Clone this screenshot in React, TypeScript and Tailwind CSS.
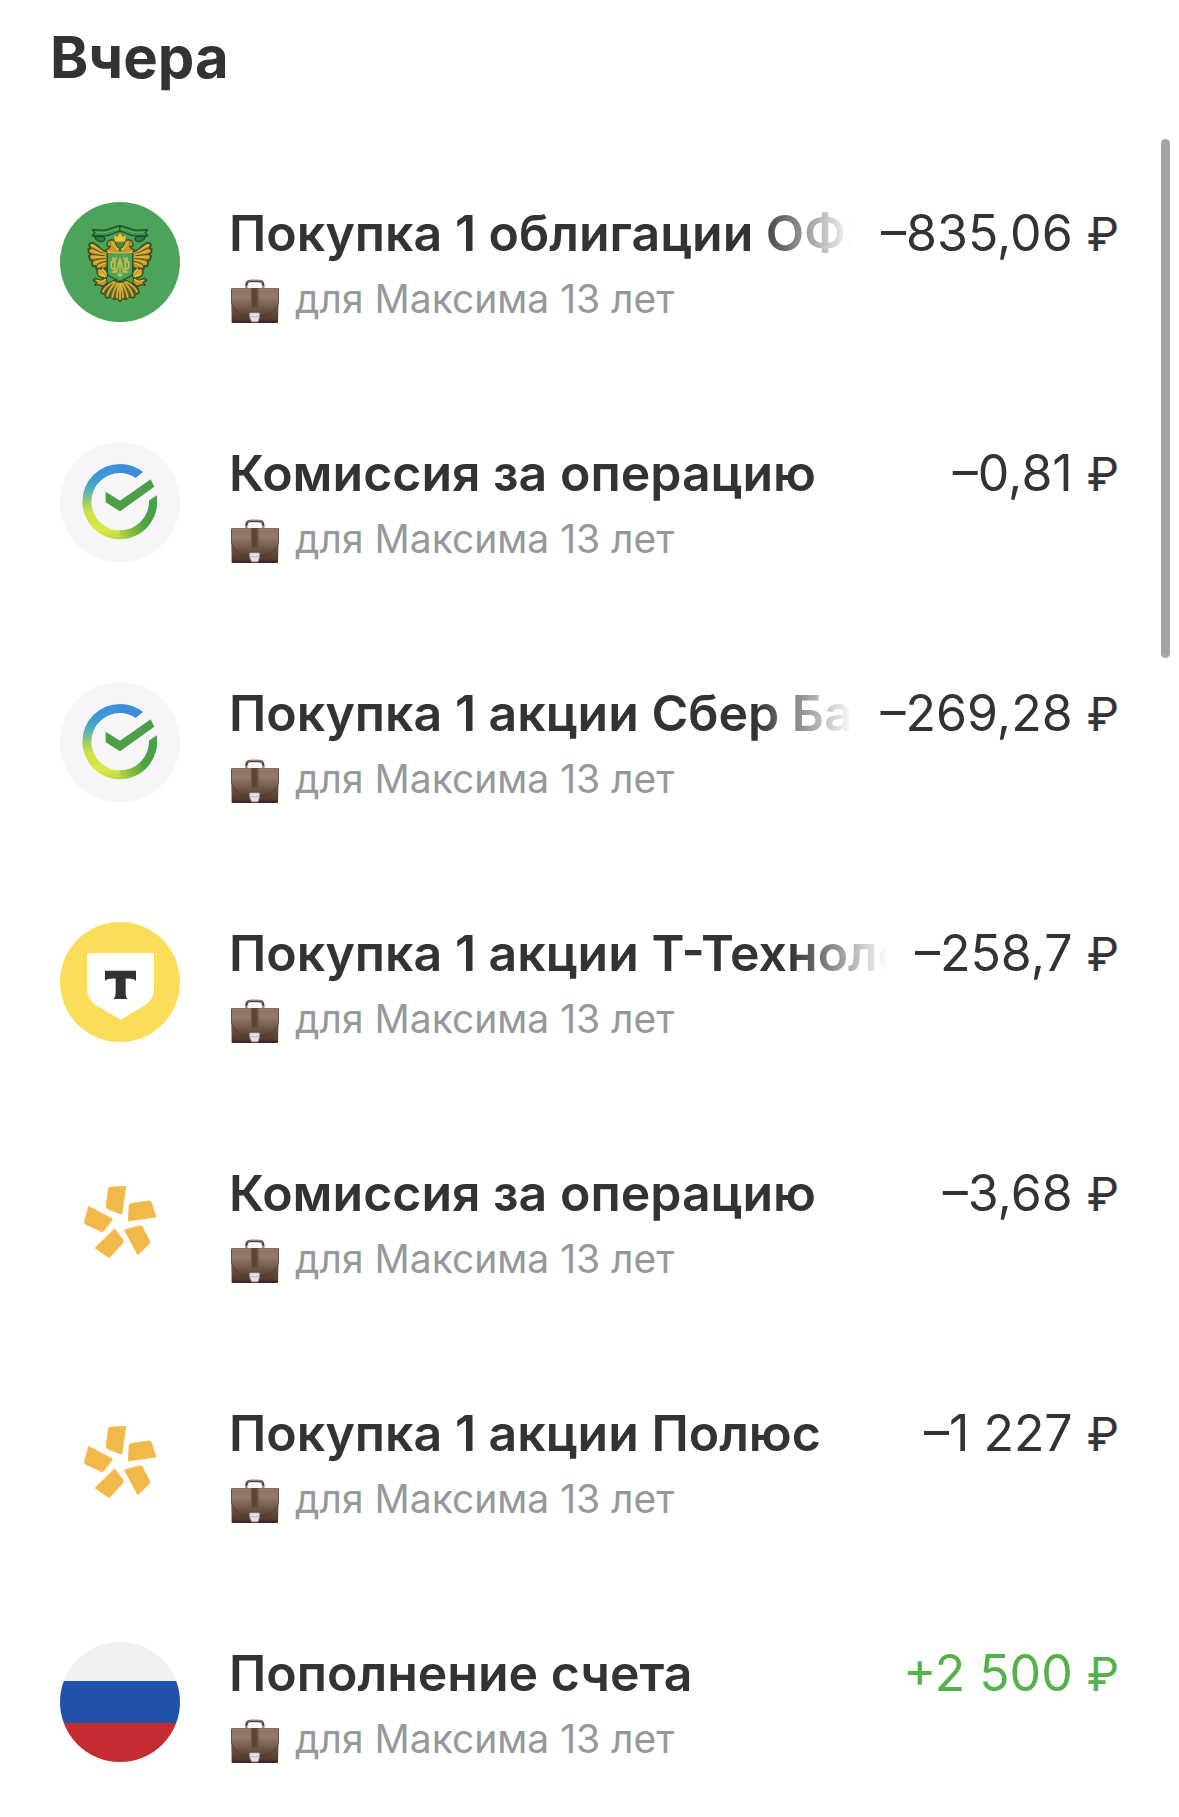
import type { ReactNode } from "react";

interface Operation {
  id: number;
  title: string;
  amount: string;
  faded?: boolean;
  income?: boolean;
  logo: ReactNode;
}

function BondLogo() {
  // half of the emblem, mirrored around x = 240
  const half = (
    <g strokeLinejoin="round" strokeLinecap="round">
      <path d="M240 137C222 139 212 149 196 150C184 151 174 149 157 149L164 158L157 168C176 167 192 169 206 166C220 163 228 155 240 154Z" fill="#3a9250" stroke="#1b4f2c" strokeWidth="4" />
      <path d="M170 157C190 160 205 157 217 151L240 146" fill="none" stroke="#8ab04e" strokeWidth="3" strokeDasharray="3 3" />
      <path d="M164 170C166 180 176 186 188 184C196 181 197 174 190 170Z" fill="#2c7f46" stroke="#1b4f2c" strokeWidth="4" />
      <path d="M205 214C190 214 184 209 179 203L160 188L149 190L147 198L153 204L145 208L146 218L153 221L147 228L150 240L159 241L155 249L159 259L168 258L168 266L177 270L184 264L190 268L201 262Z" fill="#bd9230" stroke="#3a4a1c" strokeWidth="5" />
      <path d="M155 196C168 200 174 208 186 214M153 213C166 214 175 221 190 222M156 231C168 229 178 232 193 231M163 249C173 243 182 243 195 240M176 260C183 252 188 250 198 249" fill="none" stroke="#deb336" strokeWidth="5" />
      <path d="M157 204C167 208 174 214 187 219M155 223C168 223 178 226 191 227M160 241C170 236 181 237 194 236M170 256C179 248 187 246 197 245" fill="none" stroke="#4a4a1c" strokeWidth="3" />
      <path d="M237 216L203 218L196 212C202 207 207 206 211 199C204 201 199 197 202 190C203 183 211 177 220 180C228 184 226 191 233 201L240 206Z" fill="#c49a2f" stroke="#3a4a1c" strokeWidth="4" />
      <path d="M206 190C213 185 218 187 220 193C222 200 229 204 236 209" fill="none" stroke="#e6bf38" strokeWidth="4" />
      <circle cx="211" cy="188" r="2" fill="#263c1c" />
      <path d="M174 265C168 275 171 287 181 291L198 297L204 286L197 267Z" fill="#c49a2f" stroke="#3a4a1c" strokeWidth="4" />
      <path d="M179 271L193 289M187 267L199 281M177 281L188 289" stroke="#e6bf38" strokeWidth="4" fill="none" />
      <path d="M198 294L184 301L166 295L160 301L171 307L164 316L177 314L188 320L202 308Z" fill="#c49a2f" stroke="#3a4a1c" strokeWidth="4" />
      <path d="M170 301C180 306 188 305 197 298" fill="none" stroke="#e6bf38" strokeWidth="4" />
      <path d="M240 308L222 300L206 309L186 324L182 339L194 344L197 354L214 353L222 360L232 356L240 365Z" fill="#56602a" stroke="#3a4a1c" strokeWidth="3" />
      <path d="M220 306C208 313 194 322 189 335M225 308C215 321 204 333 202 347M232 310C226 325 219 337 217 351M237 311C235 326 230 340 231 352" fill="none" stroke="#d3aa34" strokeWidth="6" />
    </g>
  );
  return (
    <svg viewBox="60 66 360 360" className="size-full" aria-hidden="true">
      <circle cx="240" cy="246" r="180" fill="#4ca45a" />
      {half}
      <g transform="translate(480 0) scale(-1 1)">{half}</g>
      <path d="M240 309V359" stroke="#e6bf38" strokeWidth="5" />
      <path d="M202 220L240 214L278 220V280C276 292 254 295 240 305C226 295 204 292 202 280Z" fill="#4ca45a" stroke="#28542b" strokeWidth="4" />
      <path d="M202 217H278" stroke="#deb336" strokeWidth="6" />
      <path d="M224 186L220 161L231 170L240 156L249 170L260 161L256 186Z" fill="#eec536" stroke="#5c6a27" strokeWidth="2" />
      <path d="M229 190H251L249 199L240 206L231 199Z" fill="#358b48" />
      <g fill="none" stroke="#d6bb45" strokeWidth="5">
        <path d="M216 236H230M250 236H264M224 238V275M256 238V275M215 276H231M249 276H265" />
        <path d="M224 242C210 242 210 268 224 268M256 242C270 242 270 268 256 268" />
        <path d="M229 276L240 236L251 276M240 236V289M232 281L240 289L248 281" strokeWidth="4" />
      </g>
    </svg>
  );
}

function SberLogo({ id }: { id: string }) {
  return (
    <svg viewBox="60 66 360 360" className="size-full" aria-hidden="true">
      <defs>
        <linearGradient id={`${id}-left`} gradientUnits="userSpaceOnUse" x1="220" y1="132" x2="240" y2="358">
          <stop offset="0" stopColor="#3b8fdc" />
          <stop offset="0.16" stopColor="#3f97d8" />
          <stop offset="0.32" stopColor="#52b3b4" />
          <stop offset="0.46" stopColor="#9acb69" />
          <stop offset="0.62" stopColor="#d0e045" />
          <stop offset="0.86" stopColor="#dde64a" />
          <stop offset="1" stopColor="#b9d542" />
        </linearGradient>
        <linearGradient id={`${id}-right`} gradientUnits="userSpaceOnUse" x1="239" y1="350" x2="320" y2="320">
          <stop offset="0" stopColor="#b9d542" />
          <stop offset="0.5" stopColor="#7dbb43" />
          <stop offset="1" stopColor="#4a9f47" />
        </linearGradient>
      </defs>
      <circle cx="240" cy="246" r="180" fill="#f6f6f8" />
      <path d="M239 132A113 113 0 0 1 309 156L287 174A86 86 0 0 0 239 159Z" fill="#3b8cdb" />
      <path d="M240 132A113 113 0 0 0 240 358V331A86 86 0 0 1 240 159Z" fill={`url(#${id}-left)`} />
      <path d="M239 358A113 113 0 0 0 350 226L327 242A86 86 0 0 1 239 331Z" fill={`url(#${id}-right)`} />
      <path d="M197 215L240 242L332 178L343 200L240 274L197 247Z" fill="#4a9f47" />
    </svg>
  );
}

function TLogo() {
  return (
    <svg viewBox="60 66 360 360" className="size-full" aria-hidden="true">
      <circle cx="240" cy="246" r="180" fill="#fadd58" />
      <path d="M141 159H342V264C342 289 331 307 310 319L242 359L173 319C152 307 141 289 141 264Z" fill="#fff" />
      <path d="M195 212H288V243C282 237 272 235 257 236V277C257 286 258 292 262 297H221C225 292 227 286 227 277V236C211 235 201 237 195 243Z" fill="#333" />
    </svg>
  );
}

function PolusLogo() {
  return (
    <svg viewBox="60 36 360 360" className="size-full" aria-hidden="true">
      <g fill="#f3b84a" stroke="#f3b84a" strokeWidth="2" strokeLinejoin="round">
        <path d="M211 111L258 109L245 193L203 177Q198 174 198 168L205 118Q206 111 211 111Z" />
        <path d="M274 160L327 153Q332 152 334 157L348 201L265 213L267 168Q268 161 274 160Z" />
        <path d="M146 169L218 207L192 242Q188 247 182 244L137 223Q132 220 133 215Z" />
        <path d="M224 236L249 270Q252 275 248 279L213 319Q208 324 202 320L165 294Z" />
        <path d="M253 240L299 227Q304 226 307 231L328 271Q331 277 328 282L293 314Z" />
      </g>
    </svg>
  );
}

function FlagLogo() {
  return (
    <div className="flex size-full flex-col overflow-hidden rounded-full">
      <div className="h-[39px] bg-[#f0f0f0]" />
      <div className="h-[42px] bg-[#2151ad]" />
      <div className="flex-1 bg-[#c62b30]" />
    </div>
  );
}

function Briefcase({ id }: { id: string }) {
  return (
    <svg viewBox="36 27 144 144" className="size-12 shrink-0" aria-hidden="true">
      <defs>
        <linearGradient id={`${id}-body`} x1="0" y1="0" x2="0" y2="1">
          <stop offset="0" stopColor="#8a6d5b" />
          <stop offset="0.25" stopColor="#9a7f6c" />
          <stop offset="0.6" stopColor="#6b5041" />
          <stop offset="1" stopColor="#49342a" />
        </linearGradient>
        <linearGradient id={`${id}-flap`} x1="0" y1="0" x2="0" y2="1">
          <stop offset="0" stopColor="#8f7361" />
          <stop offset="0.3" stopColor="#94796a" />
          <stop offset="1" stopColor="#563e33" />
        </linearGradient>
      </defs>
      <path d="M82 65V57Q84 45 94 45H121Q131 45 133 57V65" fill="none" stroke="#5a4336" strokeWidth="7" />
      <path d="M86 48Q90 43 97 43H119Q126 43 130 48" fill="none" stroke="#a58c7a" strokeWidth="3" />
      <path d="M78 62H88M128 62H138" stroke="#c0aea0" strokeWidth="4" />
      <path d="M42 66H174Q180 66 180 73L177 166Q177 171 171 171H43Q38 171 38 166L36 73Q36 66 42 66Z" fill={`url(#${id}-body)`} />
      <path d="M38 68H178L179 107C174 132 151 148 128 151H87C63 148 42 132 37 107Z" fill={`url(#${id}-flap)`} stroke="#49342a" strokeWidth="2" />
      <path d="M39 69H177" stroke="#a88e7c" strokeWidth="3" />
      <path d="M96 66H118V124H96Z" fill="#5e4436" />
      <path d="M98 67V124M116 67V124" stroke="#7b6050" strokeWidth="2" />
      <path d="M38 167H177" stroke="#3a2820" strokeWidth="5" />
      <path d="M92 141H121V153L117 167H98L92 153Z" fill="#e6e2e6" stroke="#b8b0b4" strokeWidth="2" />
      <path d="M93 152H121" stroke="#aaa3aa" strokeWidth="2" />
    </svg>
  );
}

const operations: Operation[] = [
  { id: 1, title: "Покупка 1 облигации ОФЗ", amount: "–835,06", faded: true, logo: <BondLogo /> },
  { id: 2, title: "Комиссия за операцию", amount: "–0,81", logo: <SberLogo id="sber-fee" /> },
  { id: 3, title: "Покупка 1 акции Сбер Банк", amount: "–269,28", faded: true, logo: <SberLogo id="sber-buy" /> },
  { id: 4, title: "Покупка 1 акции Т-Технологии", amount: "–258,7", faded: true, logo: <TLogo /> },
  { id: 5, title: "Комиссия за операцию", amount: "–3,68", logo: <PolusLogo /> },
  { id: 6, title: "Покупка 1 акции Полюс", amount: "–1 227", logo: <PolusLogo /> },
  { id: 7, title: "Пополнение счета", amount: "+2 500", income: true, logo: <FlagLogo /> },
];

const fade = "[mask-image:linear-gradient(to_right,black_calc(100%_-_96px),transparent)]";

function OperationRow({ operation }: { operation: Operation }) {
  return (
    <li className="flex items-start gap-[49px]">
      <div className="size-[120px] shrink-0">{operation.logo}</div>
      <div className="min-w-0 flex-1">
        <div className="flex gap-7 text-[50px] leading-[62px]">
          <h3 className={`min-w-0 flex-1 overflow-hidden font-semibold whitespace-nowrap ${operation.faded ? fade : ""}`}>
            {operation.title}
          </h3>
          <p className={`shrink-0 whitespace-nowrap ${operation.income ? "text-[#55b14b]" : ""}`}>
            {operation.amount} <span className="text-[46px] leading-none">₽</span>
          </p>
        </div>
        <div className="flex items-center gap-4 pl-0.5">
          <Briefcase id={`case-${operation.id}`} />
          <p className="text-[39px] leading-[70px] text-[#96989b]">для Максима 13 лет</p>
        </div>
      </div>
    </li>
  );
}

export default function App() {
  return (
    <main className="relative bg-white pt-5 pb-8 font-['Inter','Noto_Sans',sans-serif] text-[#333]">
      <h2 className="px-[50px] text-[58px] leading-[74px] font-bold">Вчера</h2>
      <ul className="flex flex-col gap-[108px] px-[60px] pt-[108px]">
        {operations.map((operation) => (
          <OperationRow key={operation.id} operation={operation} />
        ))}
      </ul>
      <div className="absolute top-[139px] right-[9px] h-[519px] w-[9px] rounded-full bg-[#a4a4a4]" />
    </main>
  );
}
